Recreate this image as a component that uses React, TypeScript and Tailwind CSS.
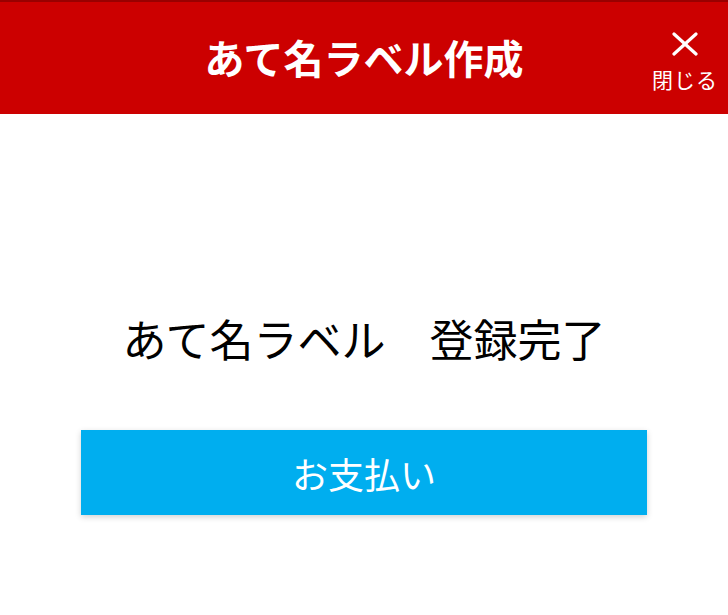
const font = { fontFamily: '"Noto Sans CJK JP", "Noto Sans", sans-serif' }

export default function App() {
    return (
        <div className="w-[728px] h-[615px] bg-white flex flex-col" style={font}>
            <header className="relative h-[114px] bg-[#cc0000] border-t-2 border-[#990000] flex items-center justify-center">
                <h1 className="text-[40px] font-bold text-white leading-none -mt-[3px]">あて名ラベル作成</h1>
                <button className="absolute right-[10px] top-[30px] w-[66px] flex flex-col items-center text-white">
                    {/* 閉じるアイコン */}
                    <svg width="26" height="24" viewBox="0 0 26 24" fill="none" stroke="currentColor" strokeWidth="3.2" strokeLinecap="round">
                        <path d="M2 2 L24 22" />
                        <path d="M24 2 L2 22" />
                    </svg>
                    <span className="text-[21px] leading-none mt-[13px] tracking-[1px]">閉じる</span>
                </button>
            </header>

            <main className="flex flex-col items-center">
                <p className="mt-[202px] text-[44px] leading-none text-black whitespace-pre">あて名ラベル　登録完了</p>
                <button className="mt-[70px] w-[566px] h-[85px] bg-[#00aeef] text-white text-[36px] shadow-[0_2px_6px_rgba(0,0,0,0.18)]">
                    お支払い
                </button>
            </main>
        </div>
    )
}
